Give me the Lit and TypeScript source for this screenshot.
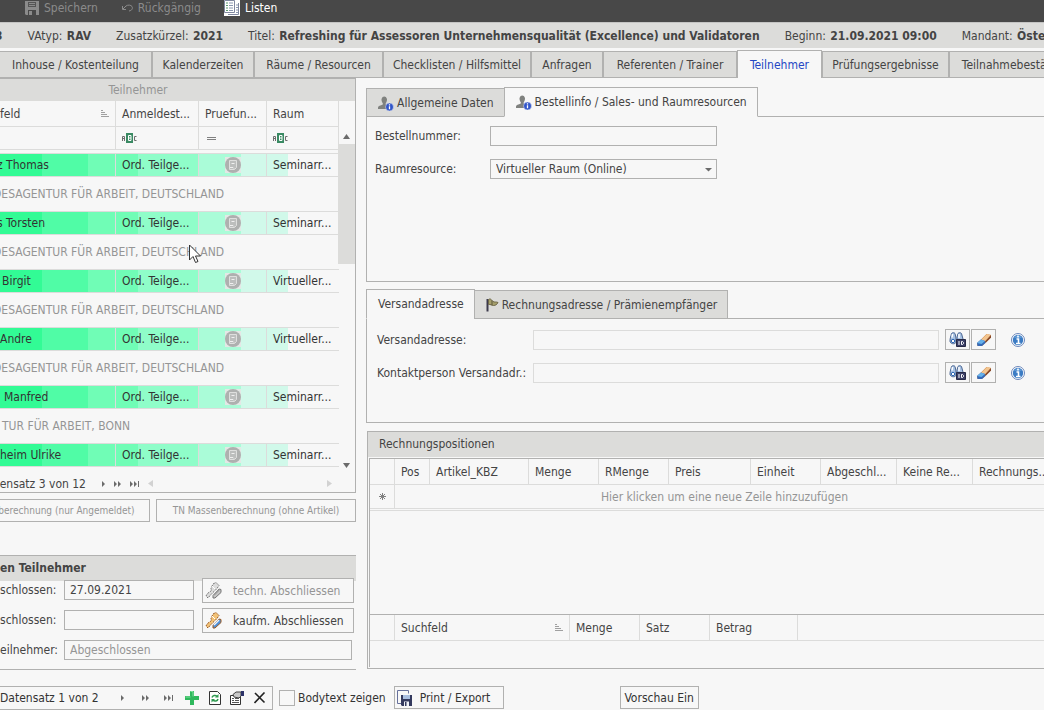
import { LitElement, html, svg, css } from "lit";
import { customElement } from "lit/decorators.js";

interface Tab { label: string; active?: boolean; width: number; }
interface Column { label: string; width?: number; sorted?: boolean; }
interface Participant { name: string; edge?: string; room: string; company: string; cutCompany?: boolean; }

const MAIN_TABS: Tab[] = [
  { label: "Inhouse / Kostenteilung", width: 152 },
  { label: "Kalenderzeiten", width: 102 },
  { label: "Räume / Resourcen", width: 129 },
  { label: "Checklisten / Hilfsmittel", width: 148 },
  { label: "Anfragen", width: 72 },
  { label: "Referenten / Trainer", width: 134 },
  { label: "Teilnehmer", width: 85, active: true },
  { label: "Prüfungsergebnisse", width: 127 },
  { label: "Teilnahmebestätigung", width: 145 },
];

const AGENCY = "DESAGENTUR FÜR ARBEIT, DEUTSCHLAND";
const PARTICIPANTS: Participant[] = [
  { name: "z Thomas", edge: "cut", room: "Seminarr...", company: AGENCY, cutCompany: true },
  { name: "s Torsten", edge: "cut", room: "Seminarr...", company: AGENCY, cutCompany: true },
  { name: "Birgit", room: "Virtueller...", company: AGENCY, cutCompany: true },
  { name: "Andre", edge: "flush", room: "Virtueller...", company: AGENCY, cutCompany: true },
  { name: "Manfred", edge: "inset", room: "Seminarr...", company: "TUR FÜR ARBEIT, BONN" },
  { name: "heim Ulrike", edge: "flush", room: "Seminarr...", company: "" },
];

const POSITION_COLUMNS: Column[] = [
  { label: "", width: 25 },
  { label: "Pos", width: 35 },
  { label: "Artikel_KBZ", width: 99 },
  { label: "Menge", width: 70 },
  { label: "RMenge", width: 70 },
  { label: "Preis", width: 82 },
  { label: "Einheit", width: 70 },
  { label: "Abgeschl...", width: 76 },
  { label: "Keine Re...", width: 76 },
  { label: "Rechnungs..." },
];

const DETAIL_COLUMNS: Column[] = [
  { label: "", width: 25 },
  { label: "Suchfeld", width: 175, sorted: true },
  { label: "Menge", width: 70 },
  { label: "Satz", width: 70 },
  { label: "Betrag", width: 88 },
  { label: "" },
];

const icon = (w: number, h: number, body: unknown, cls = "") =>
  html`<svg class="icon ${cls}" width=${w} height=${h} viewBox="0 0 ${w} ${h}" aria-hidden="true">${body}</svg>`;

const sortIcon = icon(8, 8, svg`<path d="M0 .5h2M0 2.500h4M0 4.500h6M0 6.500h8" stroke="#a0a0a0" fill="none"/>`, "sort");
const abcIcon = icon(16, 12, svg`
  <rect x="5" y="1" width="7" height="10" fill="#3a8a63"/>
  <path d="M1.500 9V4.500h2V9M1.500 6.500h2M15.500 4.500h-2v4h2" stroke="#6d6d6d" fill="none"/>
  <path d="M7.500 3.500h2.500v5H7.500zM7.500 6h2.500" stroke="#fff" fill="none"/>`);
const equalsIcon = icon(9, 5, svg`<path d="M0 1.500h9M0 3.500h9" stroke="#808080" fill="none"/>`);
const stampIcon = icon(16, 16, svg`
  <rect width="16" height="16" fill="#e4e8e6"/>
  <circle cx="8" cy="8" r="8" fill="#aeb0af"/>
  <path d="M4.500 3.500h7v7l-2 2h-5z" fill="#bcbebd" stroke="#dedfde"/>
  <path d="M6.500 6.500h3M5 10.500h3l1 1" stroke="#f0f0f0" fill="none"/>`);
const personIcon = icon(16, 16, svg`
  <path d="M3.500 4a3 4 0 0 1 5.500 0c0 2-.5 3.500-1.300 4.300V9.500L10 11v3H0v-1.500C0 11 2.500 10.500 4.800 9.500V8.300C4 7.500 3.500 6 3.500 4z" fill="#80827f"/>
  <circle cx="11.500" cy="12" r="4" fill="#3155c9" stroke="#f0f0f0" stroke-width=".5"/>
  <path d="M11.500 9.300v1.200M11.500 11.300v3" stroke="#fff" stroke-width="1.300"/>`);
const flagIcon = icon(13, 14, svg`
  <path d="M1.500 1v12.500" stroke="#3c3a4c" stroke-width="2"/>
  <path d="M2.500 1.500c2-1.500 3 .5 4.500 2 1.500 1 3 0 5 1-1 2-2.500 3-4.500 3-2 0-3-1.500-5-1z" fill="#a6a06c" stroke="#6d6748"/>
  <path d="M6 7V2.500" stroke="#5c573d"/>`);
const binocularsIcon = icon(17, 15, svg`
  <path d="M1 9c0-3 1-5 1.500-7.500C3 .5 5.500.5 6 1.500L7 6v4c0 2.500-6 2.500-6-1z" fill="#a9c3e4" stroke="#4a6591"/>
  <path d="M8 8V5l1-3.500c.5-1 3-1 3.500 0L14 7v1z" fill="#a9c3e4" stroke="#4a6591"/>
  <path d="M3.500 2L3 5.500M10 2v4" stroke="#fff" stroke-width="1.500"/>
  <circle cx="4" cy="9" r="1.700" fill="#fff" stroke="#2f68b4"/>
  <path d="M7.500 7.500h9v7h-9z" fill="#3b3f66" stroke="#262945"/>
  <path d="M10 9v4M12.500 9.500h1l1 1v1l-1 1h-1z" stroke="#fff" fill="none"/>`);
const eraserIcon = icon(16, 14, svg`
  <path d="M1 10.500L10.500 1l4.500 1v2.500L6 13H1.500z" fill="#c98748"/>
  <path d="M5 7l6-6 4 1-6 6.500z" fill="#f3c48e"/>
  <path d="M9 8.500L15 2v2.500L9.500 10z" fill="#87492a"/>
  <path d="M1 10l4-3.500L9 8l.500 2L6 13H1.500z" fill="#3569b7"/>
  <path d="M1 10l4-3.500L9 8l-3.500 3z" fill="#66b1ea"/>`);
const infoIcon = icon(14, 14, svg`
  <circle cx="7" cy="7" r="6.500" fill="#fff" stroke="#6a86ba"/>
  <circle cx="7" cy="7" r="5.200" fill="#3c7cc4"/>
  <path d="M3 4.500a5 4 0 0 1 8 0" fill="#7db2e4"/>
  <path d="M7 2.500v2M5.500 6H7.500v4M5 10.500h4.500" stroke="#fff" stroke-width="1.600" fill="none"/>`, "hint");
const stampKeyIcon = (a: string, b: string, c: string, line: string) => icon(17, 17, svg`
  <path d="M8 2l3-1.500 3 3-2 3-3 3-3.500 3.500L3 16l-2-2 1.500-2.500 4-3L6 6.500z" fill=${a} stroke=${line} stroke-dasharray="2 1"/>
  <path d="M8 13.500l6-6.500 2 .5v3l-6 5.500h-2z" fill=${b} stroke=${line}/>
  <path d="M9 13l5-5" stroke=${c} stroke-width="1.500"/>
  <path d="M7 4l3 3" stroke="#fff"/>`);
const saveIcon = icon(14, 14, svg`
  <path d="M0 0h14v14H1l-1-1z" fill="#8b8b8b"/><path d="M3 1h8v5H3z" fill="#555"/><path d="M4 2.500h6M4 4.500h6" stroke="#8b8b8b"/>
  <path d="M3 9h8v5H3z" fill="#484848"/><path d="M4 10h3v4H4z" fill="#8b8b8b"/>`);
const undoIcon = icon(12, 9, svg`<path d="M5 5.500H1.500V2M2 5L5 2c2-1.500 5-1 6 .5 1 2 0 4-3 4.500" stroke="#8b8b8b" fill="none"/>`);
const listIcon = icon(16, 16, svg`
  <rect width="16" height="16" fill="#fff"/><path d="M.500.500h10v12H.500zM4 14.500h10.500V3" fill="#fff" stroke="#8088a0"/>
  <path d="M2 3h2M2 5.500h2M2 8h2M2 10.500h2" stroke="#5d9a70"/><path d="M5 3h4M5 5.500h4M5 8h4M5 10.500h4M12 5h2M12 7.500h2M12 10h2M12 12.500h2" stroke="#8a97b0"/>`);
const plusIcon = icon(14, 14, svg`<path d="M5 0h4v5h5v4H9v5H5V9H0V5h5z" fill="#2fb85c"/><path d="M5.500.500h2.500v5M.500 6h5" stroke="#7ee09a" fill="none"/>`);
const refreshIcon = icon(12, 14, svg`
  <path d="M.500.500h8l3 3v10H.500z" fill="#fff" stroke="#333"/>
  <path d="M3 6.500c.500-2 3.500-3 5-1M9 8c-.500 2-3.500 3-5 1" stroke="#2f9a50" stroke-width="1.500" fill="none"/>
  <path d="M9.500 3v3.500H6zM2.500 11.500V8H6z" fill="#2f9a50"/>`);
const propsIcon = icon(14, 14, svg`
  <path d="M.500 4.500h10v9H.500z" fill="#fff" stroke="#333"/>
  <path d="M2 7.500h2M5 7.500h4M2 9.500h2M5 9.500h4M2 11.500h7" stroke="#555"/>
  <path d="M3 3.500L6 1h5v4l-2 2-5-1z" fill="#c9c9c9" stroke="#444"/><path d="M11 0h3v5h-3z" fill="#2c3268"/>`);
const closeIcon = icon(12, 12, svg`<path d="M1 1l9.500 9.500M10.500.500L.500 11" stroke="#222" stroke-width="1.600" fill="none"/>`);
const printIcon = icon(16, 16, svg`
  <path d="M.500.500h11v3M.500.500v13H4" fill="none" stroke="#66709b"/>
  <path d="M4 5h11v11H5l-1-1z" fill="#343a5e"/><path d="M6 5h7v4H6z" fill="#a9bfe0"/><path d="M7 11.500h5V16H7z" fill="#eef1f8"/><path d="M8 12h1.500v4H8z" fill="#343a5e"/>`);
const nextIcon = icon(4, 6, svg`<path d="M0 0v6l3-3z" fill="#6b6b6b"/>`);
const fastIcon = icon(8, 6, svg`<path d="M0 0v6l3-3zM4 0v6l3-3z" fill="#6b6b6b"/>`);
const lastIcon = icon(10, 6, svg`<path d="M0 0v6l3-3zM4 0v6l3-3zM8 0h1v6H8z" fill="#6b6b6b"/>`);
const starIcon = icon(7, 7, svg`<path d="M3.500 0v7M0 3.500h7M1 1l5 5M6 1L1 6" stroke="#808080" fill="none"/>`);

@customElement("app-root")
export class AppRoot extends LitElement {
  static styles = css`
    :host {
      display: flex; flex-direction: column; position: relative; min-height: 100vh; overflow: hidden;
      background: #f7f7f7; color: #444; box-sizing: border-box;
      font: 12px/16px "DejaVu Sans Condensed", Tahoma, "Noto Sans", sans-serif;
      --line: #b1b1b0; --soft: #dcdcdb; --bar: #dcdcda;
    }
    *, *::before { box-sizing: border-box; }
    button, input, select { font: inherit; color: inherit; margin: 0; border-radius: 0; background: #f7f7f7; }
    button { padding: 0; border: 1px solid var(--line); display: flex; align-items: center; white-space: nowrap; }
    .icon { display: block; flex: none; }
    .plain { border: 0; background: none; }

    .toolbar { display: flex; align-items: flex-start; height: 22px; padding-left: 25px; background: #484848; color: #8b8b8b; flex: none; }
    .toolbar button { height: 16px; gap: 5px; margin-right: 23px; }
    .toolbar .bright { color: #fff; }
    .info { display: flex; gap: 25px; height: 26px; align-items: center; background: var(--bar); border-top: 1px solid #c4c4c3; white-space: nowrap; flex: none; }
    .info b { margin-left: 1px; }
    .info > b { margin-left: -5px; }

    .tabs { display: flex; align-items: flex-end; white-space: nowrap; flex: none; }
    .tab { display: flex; align-items: center; justify-content: center; gap: 3px; background: var(--bar); border: 1px solid var(--line); flex: none; }
    .tab.active { background: #f7f7f7; border-bottom-color: transparent; }
    .tabs.main { padding-top: 2px; }
    .main .tab { height: 27px; }
    .main .tab:first-child { border-left: 0; }
    .main .tab.active { height: 28px; color: #2447c4; border-bottom: 0; }
    .sub::after { content: ""; flex: 1; border-bottom: 1px solid var(--line); }
    .sub .tab { height: 29px; padding: 0 10px 0 11px; }
    .sub .tab.active { height: 30px; }
    .sub .tab + .tab { margin-left: -1px; }

    main { display: flex; gap: 10px; flex: 1; }
    .left { width: 356px; flex: none; display: flex; flex-direction: column; }
    .right { flex: 1; min-width: 0; display: flex; flex-direction: column; padding-top: 9px; }

    .people { position: relative; border: solid var(--line); border-width: 0 1px 1px 0; height: 415px; }
    .caption { height: 23px; line-height: 23px; background: var(--bar); color: #959595; text-align: center; padding-right: 79px; border-top: 1px solid var(--line); }
    table { border-collapse: separate; border-spacing: 0; table-layout: fixed; }
    th, td { padding: 0; text-align: left; font-weight: normal; white-space: nowrap; overflow: hidden; }
    .list { width: 339px; }
    .list th { height: 26px; padding-left: 6px; border: solid var(--soft); border-width: 0 1px 1px 0; }
    .list th:first-child { padding: 0 6px 0 0; }
    .list .filter td { height: 23px; padding-left: 5px; border: solid var(--soft); border-width: 0 1px 1px 0; }
    .list .filter td:nth-child(3) { padding-left: 8px; }
    .head { display: flex; align-items: center; justify-content: space-between; }
    .spacer td { height: 3px; }
    .person { color: #333; background: linear-gradient(to right, #32fb95 0 42px, #50fca6 42px 88px, #70fdb6 88px 138px, #8ffdc9 138px 198px, #aafcd8 198px 241px, #d1f9ea 241px 288px, #f7f7f7 288px); }
    .person td { height: 24px; padding-left: 6px; border: solid var(--soft); border-width: 1px 1px 1px 0; }
    .person td:first-child { padding-left: 2px; }
    .person td:first-child.flush { padding-left: 0; }
    .person td:first-child.inset { padding-left: 4px; }
    .person td:first-child.cut { padding-left: 0; text-indent: -3px; }
    .person td:nth-child(3) { padding-left: 26px; }
    .person td:last-child { border-right: 0; }
    .preview td { height: 34px; color: #959595; padding-left: 2px; }
    .preview td.cut { padding-left: 0; text-indent: -7px; }
    .scroll { position: absolute; right: 0; top: 49px; width: 17px; height: 341px; display: flex; flex-direction: column; align-items: center; }
    .scroll .up { height: 17px; padding-top: 7px; }
    .thumb { width: 17px; height: 120px; background: var(--bar); }
    .scroll .down { margin-top: auto; }
    .nav { display: flex; align-items: center; }
    .record { display: flex; justify-content: flex-end; white-space: nowrap; }
    .people .nav { height: 26px; padding-top: 7px; }
    .people .record { width: 86px; margin-right: 16px; }
    .people .nav button { margin-right: 8px; }
    .people .nav .hright { margin-left: auto; margin-right: 23px; }

    .bill { display: flex; gap: 6px; justify-content: flex-end; margin-top: 6px; font-size: 10px; color: #959595; }
    .bill button { width: 200px; height: 23px; justify-content: center; flex: none; }
    .bill button:first-child { width: 216px; }

    .finish { margin-top: 33px; border: solid var(--line); border-width: 1px 0; height: 115px; }
    .finish h2 { margin: 0; height: 25px; background: var(--bar); font-size: 12px; line-height: 25px; }
    .rows { display: grid; grid-template-columns: 54px 130px 152px; column-gap: 10px; grid-auto-rows: 30px; align-items: start; margin-top: -1px; }
    .rows label { text-align: right; line-height: 20px; white-space: nowrap; }
    .rows input { width: 100%; height: 20px; border: 1px solid var(--line); padding: 0 5px; }
    .rows input:disabled, .off { color: #959595; }
    .rows input.wide { grid-column: 2 / 4; width: 288px; }
    .rows button { height: 25px; margin: -2px 0 0 -2px; padding-left: 2px; gap: 11px; width: 152px; }

    .panel { border: solid var(--line); border-width: 0 0 1px 1px; }
    .order { height: 165px; padding: 9px 0 0 8px; display: grid; grid-template-columns: 115px 227px; grid-auto-rows: 20px; row-gap: 13px; align-content: start; align-items: center; }
    .order input, .order select { width: 100%; height: 20px; border: 1px solid var(--line); padding: 0 5px; }
    .choice { position: relative; }
    .order select { appearance: none; display: block; }
    .choice .icon { position: absolute; right: 5px; top: 9px; pointer-events: none; }
    .address { height: 104px; padding: 10px 19px 0 10px; display: flex; flex-direction: column; gap: 12px; }
    .line { display: flex; align-items: center; height: 21px; }
    .line label { width: 156px; flex: none; white-space: nowrap; }
    .line input { flex: 1; min-width: 0; height: 20px; border: 1px solid var(--soft); margin-right: 6px; }
    .line button { width: 25px; height: 21px; justify-content: center; margin-right: 1px; }
    .line .hint { margin-left: 14px; }
    .second { margin-top: 7px; }

    .positions { margin: 8px 0 0 1px; height: 238px; border: solid var(--line); border-width: 1px 0 1px 1px; display: flex; flex-direction: column; }
    .positions h2 { margin: 0; font: inherit; line-height: 25px; height: 25px; padding-left: 11px; background: var(--bar); }
    .inner { margin: 1px 0 1px 1px; border-left: 1px solid var(--line); border-top: 1px solid var(--line); flex: 1; display: flex; flex-direction: column; }
    .inner table { width: 100%; }
    .inner th { height: 26px; padding-left: 6px; border: solid var(--soft); border-width: 0 1px 1px 0; }
    .inner th:last-child { border-right: 0; }
    .inner th .head { padding-right: 6px; }
    .fresh td { height: 24px; border-bottom: 1px solid var(--soft); color: #959595; text-align: center; }
    .fresh td:first-child { border-right: 1px solid var(--soft); padding-left: 9px; }
    .fresh td:last-child { padding-left: 10px; }
    .after { height: 2px; border-bottom: 1px solid var(--soft); }
    .detail { margin-top: auto; border-top: 1px solid var(--line); height: 53px; }

    footer { display: flex; align-items: flex-start; height: 24px; flex: none; color: #333; }
    .datanav { width: 273px; height: 24px; border: 1px solid var(--line); border-left: 0; padding-right: 6px; gap: 10px; }
    .datanav .record { width: 101px; margin-right: 8px; }
    .datanav .step { width: 14px; justify-content: center; }
    .datanav button:not(.step) { width: 13px; justify-content: center; }
    footer label { display: flex; align-items: center; gap: 3px; height: 24px; margin-left: 6px; white-space: nowrap; }
    footer input { appearance: none; width: 16px; height: 16px; border: 1px solid var(--line); }
    footer > button { height: 23px; }
    .print { width: 110px; margin-left: 8px; padding-left: 2px; gap: 7px; }
    .preview-on { width: 79px; margin-left: 116px; justify-content: center; }
    .pointer { position: absolute; left: 189px; top: 244px; }
  `;

  private columns(cols: Column[]) {
    return html`<colgroup>${cols.map(c => html`<col style=${c.width ? `width:${c.width}px` : ""}>`)}</colgroup>
      <thead><tr>${cols.map(c => html`<th>${c.sorted ? html`<span class="head">${c.label}${sortIcon}</span>` : c.label}</th>`)}</tr></thead>`;
  }

  private participants() {
    return html`
      <section class="people">
        <div class="caption">Teilnehmer</div>
        <table class="list">
          <colgroup><col style="width:116px"><col style="width:83px"><col style="width:68px"><col style="width:72px"></colgroup>
          <thead>
            <tr><th><span class="head">feld${sortIcon}</span></th><th>Anmeldest...</th><th>Pruefun...</th><th>Raum</th></tr>
            <tr class="filter"><td></td><td>${abcIcon}</td><td>${equalsIcon}</td><td>${abcIcon}</td></tr>
            <tr class="spacer"><td colspan="4"></td></tr>
          </thead>
          <tbody>
            ${PARTICIPANTS.map(p => html`
              <tr class="person"><td class=${p.edge ?? ""}>${p.name}</td><td>Ord. Teilge...</td><td>${stampIcon}</td><td>${p.room}</td></tr>
              ${p.company ? html`<tr class="preview"><td colspan="4" class=${p.cutCompany ? "cut" : ""}>${p.company}</td></tr>` : ""}`)}
          </tbody>
        </table>
        <div class="scroll">
          <div class="up">${icon(7, 5, svg`<path d="M0 5l3.500-5L7 5z" fill="#6b6b6b"/>`)}</div>
          <div class="thumb"></div>
          <div class="down">${icon(7, 5, svg`<path d="M0 0l3.500 5L7 0z" fill="#6b6b6b"/>`)}</div>
        </div>
        <div class="nav">
          <span class="record">Datensatz 3 von 12</span>
          <button class="plain" aria-label="Weiter">${nextIcon}</button>
          <button class="plain" aria-label="Seite weiter">${fastIcon}</button>
          <button class="plain" aria-label="Ende">${lastIcon}</button>
          ${icon(5, 7, svg`<path d="M5 0v7L0 3.500z" fill="#d2d2d2"/>`)}
          ${icon(5, 7, svg`<path d="M0 0v7l5-3.500z" fill="#d2d2d2"/>`, "hright")}
        </div>
      </section>`;
  }

  render() {
    return html`
      <header class="toolbar">
        <button class="plain">${saveIcon}Speichern</button>
        <button class="plain">${undoIcon}Rückgängig</button>
        <button class="plain bright">${listIcon}Listen</button>
      </header>
      <div class="info">
        <b>3</b><span>VAtyp: <b>RAV</b></span><span>Zusatzkürzel: <b>2021</b></span>
        <span>Titel: <b>Refreshing für Assessoren Unternehmensqualität (Excellence) und Validatoren</b></span>
        <span>Beginn: <b>21.09.2021 09:00</b></span><span>Mandant: <b>Österreich</b></span>
      </div>
      <nav class="tabs main">
        ${MAIN_TABS.map(t => html`<button class="tab ${t.active ? "active" : ""}" style="width:${t.width}px">${t.label}</button>`)}
      </nav>
      <main>
        <div class="left">
          ${this.participants()}
          <div class="bill"><button>TN Massenberechnung (nur Angemeldet)</button><button>TN Massenberechnung (ohne Artikel)</button></div>
          <section class="finish">
            <h2>en Teilnehmer</h2>
            <div class="rows">
              <label for="tech">schlossen:</label><input id="tech" value="27.09.2021">
              <button class="off">${stampKeyIcon("#dcdcdc", "#c4c4c4", "#999", "#777")}techn. Abschliessen</button>
              <label for="kaufm">schlossen:</label><input id="kaufm">
              <button>${stampKeyIcon("#f2c277", "#4f8fd6", "#e8f3ff", "#9a5a24")}kaufm. Abschliessen</button>
              <label for="state">eilnehmer:</label><input id="state" class="wide" value="Abgeschlossen" disabled>
            </div>
          </section>
        </div>
        <div class="right">
          <nav class="tabs sub">
            <button class="tab">${personIcon}Allgemeine Daten</button>
            <button class="tab active">${personIcon}Bestellinfo / Sales- und Raumresourcen</button>
          </nav>
          <section class="panel order">
            <label for="number">Bestellnummer:</label><input id="number">
            <label for="room">Raumresource:</label>
            <span class="choice"><select id="room"><option>Virtueller Raum (Online)</option></select>${icon(7, 4, svg`<path d="M0 0h7L3.500 3.500z" fill="#6b6b6b"/>`)}</span>
          </section>
          <nav class="tabs sub second">
            <button class="tab active">Versandadresse</button>
            <button class="tab">${flagIcon}Rechnungsadresse / Prämienempfänger</button>
          </nav>
          <section class="panel address">
            ${["Versandadresse:", "Kontaktperson Versandadr.:"].map((label, i) => html`
              <div class="line">
                <label for="address${i}">${label}</label><input id="address${i}">
                <button aria-label="Suchen">${binocularsIcon}</button><button aria-label="Leeren">${eraserIcon}</button>
                ${infoIcon}
              </div>`)}
          </section>
          <section class="positions">
            <h2>Rechnungspositionen</h2>
            <div class="inner">
              <table>${this.columns(POSITION_COLUMNS)}
                <tbody><tr class="fresh"><td>${starIcon}</td><td colspan="9">Hier klicken um eine neue Zeile hinzuzufügen</td></tr></tbody>
              </table>
              <div class="after"></div>
              <div class="detail"><table>${this.columns(DETAIL_COLUMNS)}</table></div>
            </div>
          </section>
        </div>
      </main>
      <footer>
        <div class="nav datanav">
          <span class="record">Datensatz 1 von 2</span>
          <button class="plain step" aria-label="Weiter">${nextIcon}</button>
          <button class="plain step" aria-label="Seite weiter">${fastIcon}</button>
          <button class="plain step" aria-label="Ende">${lastIcon}</button>
          <button class="plain" aria-label="Neu">${plusIcon}</button>
          <button class="plain" aria-label="Aktualisieren">${refreshIcon}</button>
          <button class="plain" aria-label="Eigenschaften">${propsIcon}</button>
          <button class="plain" aria-label="Schliessen">${closeIcon}</button>
        </div>
        <label><input type="checkbox">Bodytext zeigen</label>
        <button class="print">${printIcon}Print / Export</button>
        <button class="preview-on">Vorschau Ein</button>
      </footer>
      <svg class="pointer" width="13" height="20" viewBox="0 0 13 20" aria-hidden="true">
        <path d="M.500 1v15l3.500-3.500 2.500 6 2.500-1-2.500-5.500h5z" fill="#fff" stroke="#333"/>
      </svg>`;
  }
}
